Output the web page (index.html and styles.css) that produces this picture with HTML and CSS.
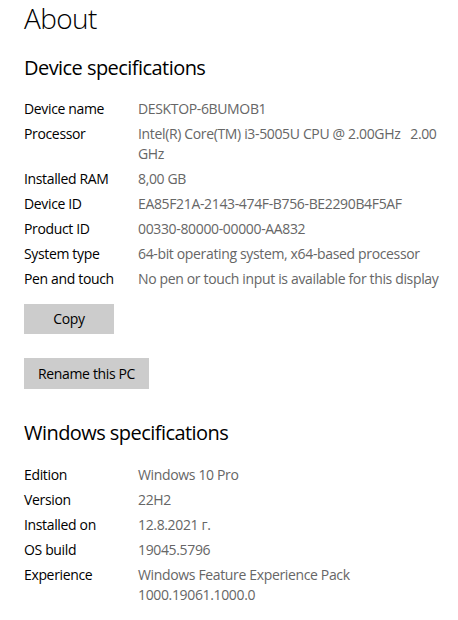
FILE: index.html
```html
<!DOCTYPE html>
<html lang="en">
<head>
<meta charset="utf-8">
<title>About</title>
<link rel="stylesheet" href="styles.css">
</head>
<body>
<main class="page">
  <h1 class="title">About</h1>

  <section class="section">
    <h2 class="section-title">Device specifications</h2>
    <dl class="specs">
      <div class="spec"><dt>Device name</dt><dd>DESKTOP-6BUMOB1</dd></div>
      <div class="spec"><dt>Processor</dt><dd>Intel(R) Core(TM) i3-5005U CPU @ 2.00GHz&nbsp;&nbsp; 2.00 GHz</dd></div>
      <div class="spec"><dt>Installed RAM</dt><dd>8,00 GB</dd></div>
      <div class="spec"><dt>Device ID</dt><dd>EA85F21A-2143-474F-B756-BE2290B4F5AF</dd></div>
      <div class="spec"><dt>Product ID</dt><dd>00330-80000-00000-AA832</dd></div>
      <div class="spec"><dt>System type</dt><dd>64-bit operating system, x64-based processor</dd></div>
      <div class="spec"><dt>Pen and touch</dt><dd>No pen or touch input is available for this display</dd></div>
    </dl>
    <div class="actions">
      <button class="btn btn-copy" type="button">Copy</button>
      <button class="btn" type="button">Rename this PC</button>
    </div>
  </section>

  <section class="section">
    <h2 class="section-title">Windows specifications</h2>
    <dl class="specs">
      <div class="spec"><dt>Edition</dt><dd>Windows 10 Pro</dd></div>
      <div class="spec"><dt>Version</dt><dd>22H2</dd></div>
      <div class="spec"><dt>Installed on</dt><dd>12.8.2021 г.</dd></div>
      <div class="spec"><dt>OS build</dt><dd>19045.5796</dd></div>
      <div class="spec"><dt>Experience</dt><dd>Windows Feature Experience Pack 1000.19061.1000.0</dd></div>
    </dl>
    <div class="actions">
      <button class="btn btn-copy" type="button">Copy</button>
    </div>
  </section>
</main>
</body>
</html>
```

FILE: styles.css
```css
html, body {
  margin: 0;
  padding: 0;
  background: #ffffff;
}

body {
  font-family: "Open Sans", "Noto Sans", "Liberation Sans", sans-serif;
  color: #000000;
  letter-spacing: -0.35px;
  overflow: hidden;
}

.page {
  padding: 0 8px 0 24px;
}

.title {
  margin: 0;
  font-size: 28px;
  font-weight: 300;
  line-height: 36px;
  letter-spacing: -0.6px;
}

.section-title {
  margin: 18px 0 0;
  font-size: 20px;
  font-weight: 400;
  line-height: 28px;
  letter-spacing: -0.55px;
}

.specs {
  margin: 17px 0 0;
  display: flex;
  flex-direction: column;
  gap: 5px;
}

.section + .section .specs {
  margin-top: 18px;
}

.spec {
  display: flex;
  font-size: 14px;
  line-height: 20px;
}

.spec dt {
  flex: 0 0 114px;
  color: #000000;
}

.spec dd {
  margin: 0;
  flex: 1;
  color: #666666;
}

.actions {
  margin-top: 15px;
  display: flex;
  flex-direction: column;
  align-items: flex-start;
  gap: 24px;
}

.btn {
  font-family: inherit;
  font-size: 14px;
  letter-spacing: -0.35px;
  color: #000000;
  background: #cccccc;
  border: none;
  border-radius: 0;
  height: 31px;
  padding: 0 14px;
  line-height: 20px;
}

.btn-copy {
  width: 90px;
  height: 30px;
}

.section + .section {
  margin-top: 30px;
}
```
